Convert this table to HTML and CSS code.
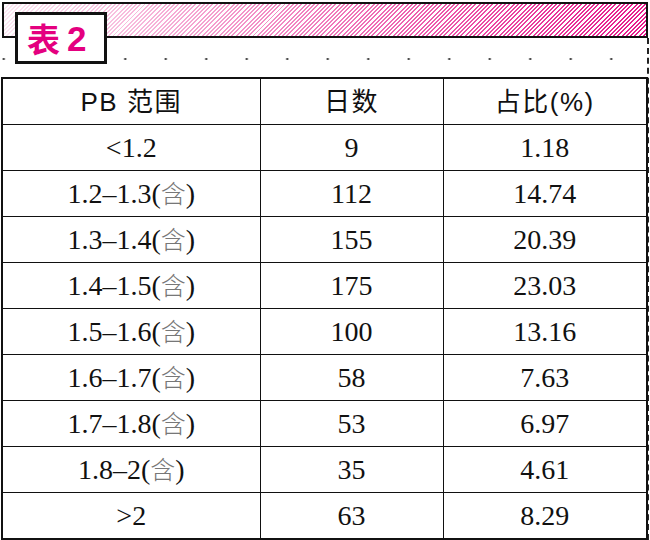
FILE: index.html
```html
<!DOCTYPE html>
<html lang="zh">
<head>
<meta charset="utf-8">
<title>表 2</title>
<link rel="stylesheet" href="styles.css">
</head>
<body>
<div class="page">
  <div class="head">
    <div class="bar"></div>
    <div class="tag"><span class="tag-cn">表</span><span class="tag-num">2</span></div>
  </div>
  <div class="main">
    <div class="dots"></div>
    <table class="data">
      <colgroup><col class="c1"><col class="c2"><col class="c3"></colgroup>
      <thead>
        <tr><th>PB 范围</th><th>日数</th><th>占比(%)</th></tr>
      </thead>
      <tbody>
        <tr><td>&lt;1.2</td><td>9</td><td>1.18</td></tr>
        <tr><td>1.2–1.3(<span class="han">含</span>)</td><td>112</td><td>14.74</td></tr>
        <tr><td>1.3–1.4(<span class="han">含</span>)</td><td>155</td><td>20.39</td></tr>
        <tr><td>1.4–1.5(<span class="han">含</span>)</td><td>175</td><td>23.03</td></tr>
        <tr><td>1.5–1.6(<span class="han">含</span>)</td><td>100</td><td>13.16</td></tr>
        <tr><td>1.6–1.7(<span class="han">含</span>)</td><td>58</td><td>7.63</td></tr>
        <tr><td>1.7–1.8(<span class="han">含</span>)</td><td>53</td><td>6.97</td></tr>
        <tr><td>1.8–2(<span class="han">含</span>)</td><td>35</td><td>4.61</td></tr>
        <tr><td>&gt;2</td><td>63</td><td>8.29</td></tr>
      </tbody>
    </table>
  </div>
</div>
</body>
</html>
```

FILE: styles.css
```css
html, body {
  margin: 0;
  padding: 0;
  background: #fff;
}

.page {
  width: 650px;
  height: 540px;
  overflow: hidden;
}

.head {
  position: relative;
  height: 38px;
  padding: 2px 0 0 2px;
  box-sizing: border-box;
}

.bar {
  box-sizing: border-box;
  width: 646px;
  height: 36px;
  border: 2px solid #111;
  background:
    linear-gradient(to right, rgba(255,255,255,0.9) 0%, rgba(255,255,255,0.6) 35%, rgba(255,255,255,0.1) 100%),
    repeating-linear-gradient(135deg, #e4007f 0 1.4px, #ffffff 1.4px 3px);
}

.tag {
  position: absolute;
  left: 15px;
  top: 12px;
  box-sizing: border-box;
  width: 92px;
  height: 52px;
  border: 3px solid #111;
  background: #fff;
  display: flex;
  align-items: center;
  gap: 7px;
  padding-left: 9px;
  color: #e4007f;
  font-family: "Noto Sans CJK SC", "Noto Sans", sans-serif;
  font-weight: 700;
  font-size: 33px;
  line-height: 1;
}

.tag-num {
  font-family: "Liberation Sans", Arial, sans-serif;
  font-size: 35px;
}

.main {
  width: 647px;
  height: 502px;
  border-right: 2px dashed #222;
}

.dots {
  height: 39px;
  background-image: radial-gradient(circle, #333 0.9px, transparent 1.3px);
  background-size: 40.5px 4px;
  background-position: 105px 19px;
  background-repeat: repeat-x;
}

.data {
  margin-left: 1px;
  width: 645px;
  table-layout: fixed;
  border-collapse: collapse;
  border: 2px solid #111;
}

.c1 { width: 258px; }
.c2 { width: 183px; }
.c3 { width: 204px; }

.data th,
.data td {
  height: 45px;
  padding: 0;
  border: 1.5px solid #111;
  text-align: center;
  vertical-align: middle;
  color: #111;
  line-height: 1;
}

.data th {
  font-family: "Liberation Sans", "Noto Sans CJK SC", sans-serif;
  font-weight: 400;
  font-size: 26px;
  letter-spacing: 1.5px;
}

.data td {
  font-family: "Liberation Serif", "Noto Sans CJK SC", serif;
  font-size: 28px;
}

.han {
  font-family: "Noto Sans CJK SC", sans-serif;
  font-weight: 300;
  font-size: 25px;
  color: #777;
}
```
